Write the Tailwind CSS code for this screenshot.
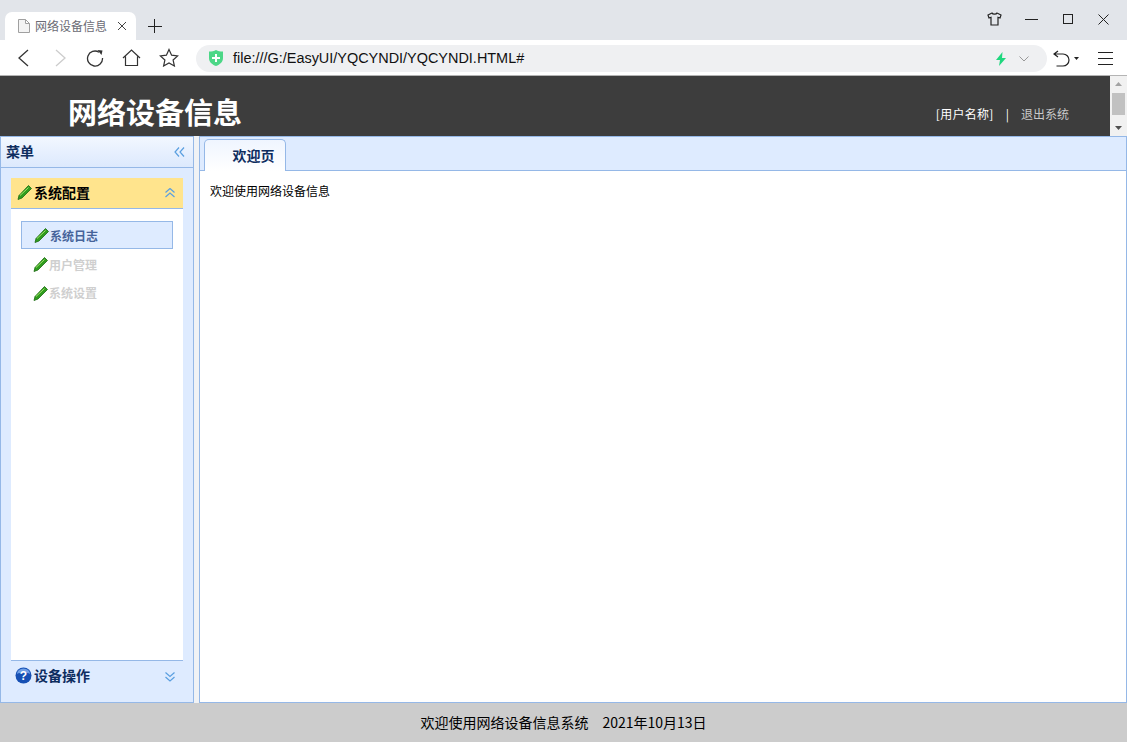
<!DOCTYPE html>
<html lang="zh-CN">
<head>
  <meta charset="UTF-8" />
  <title>网络设备信息</title>
  <script src="https://cdn.jsdelivr.net/npm/@tailwindcss/browser@4"></script>
</head>
<body class="h-[742px] w-[1127px] overflow-hidden flex flex-col bg-white font-['Noto_Sans_CJK_SC','Liberation_Sans',sans-serif] text-[12px] text-black">
  <!-- browser tab strip -->
  <div class="h-[40px] bg-[#e2e5ea] flex items-end pl-[5px] relative shrink-0">
    <div class="w-[131px] h-[28px] bg-white rounded-t-[7px] flex items-center pl-[13px] text-[#6b6b75]">
      <svg width="12" height="14" viewBox="0 0 12 14" fill="#f4f4f4" stroke="#a0a0a0"><path d="M.5.5h7l4 4v9H.5zM7.5.5v4h4"/></svg>
      <span class="ml-[5px] leading-[18px]">网络设备信息</span>
      <svg class="ml-[10px]" width="10" height="10" viewBox="0 0 10 10" stroke="#444" fill="none"><path d="M1 1l8 8M9 1l-8 8"/></svg>
    </div>
    <svg class="ml-[12px] mb-[7px]" width="14" height="14" viewBox="0 0 14 14" stroke="#222" fill="none"><path d="M6.500 0v14M0 7.500h14"/></svg>
    <div class="absolute top-[12px] left-[987px] flex items-center">
      <svg width="15" height="14" viewBox="0 0 15 14" stroke="#222" fill="none" stroke-width="1.200"><path d="M5 1L1 3l1 3 2-.7V13h7V5.300l2 .7 1-3-4-2c-.5 1.600-4.500 1.600-5 0z"/></svg>
      <svg class="ml-[23px]" width="13" height="14" viewBox="0 0 13 14" stroke="#222" fill="none"><path d="M0 7.500h13"/></svg>
      <svg class="ml-[25px]" width="10" height="10" viewBox="0 0 10 10" stroke="#222" fill="none"><rect x=".5" y=".5" width="9" height="9"/></svg>
      <svg class="ml-[25px]" width="11" height="11" viewBox="0 0 11 11" stroke="#222" fill="none"><path d="M.5.500l10 10M10.500.500l-10 10"/></svg>
    </div>
  </div>

  <!-- browser toolbar -->
  <div class="h-[36px] bg-white border-b border-[#b4b4b4] flex items-center relative shrink-0">
    <svg class="absolute left-[18px] top-[9px]" width="11" height="18" viewBox="0 0 11 18" stroke="#333" fill="none" stroke-width="1.300"><path d="M10 1L1 9l9 8"/></svg>
    <svg class="absolute left-[55px] top-[9px]" width="11" height="18" viewBox="0 0 11 18" stroke="#ccc" fill="none" stroke-width="1.300"><path d="M1 1l9 8-9 8"/></svg>
    <svg class="absolute left-[86px] top-[9px]" width="18" height="18" viewBox="0 0 18 18" stroke="#333" fill="none" stroke-width="1.300"><path d="M13 3.200A7.500 7.500 0 1 0 16.500 9"/><path d="M11.500 1l5 .5-1 4.500z" fill="#333" stroke="none"/></svg>
    <svg class="absolute left-[122px] top-[9px]" width="19" height="18" viewBox="0 0 19 18" stroke="#333" fill="none" stroke-width="1.200"><path d="M1 9l8.500-8L18 9M3.500 7.500V16.500h12V7.500"/></svg>
    <svg class="absolute left-[159px] top-[8px]" width="20" height="19" viewBox="0 0 20 19" stroke="#333" fill="none" stroke-width="1.200"><path d="M10 1.500l2.600 5.700 6 .7-4.500 4.100 1.300 6L10 15l-5.400 3 1.300-6-4.500-4.100 6-.7z"/></svg>
    <div class="absolute left-[196px] top-[5px] w-[851px] h-[27px] rounded-full bg-[#eff0f2] flex items-center pl-[13px] text-[14.450px] text-[#111]">
      <svg class="-mt-[2px]" width="14" height="16" viewBox="0 0 14 16"><path d="M0 1.500C3 1.500 5 1 7 0c2 1 4 1.500 7 1.500V8c0 4-3 6.500-7 8-4-1.500-7-4-7-8z" fill="#4cd787"/><path d="M6 4h2v3h3v2H8v3H6V9H3V7h3z" fill="#fff"/></svg>
      <span class="ml-[10px] mt-[1px] font-['Liberation_Sans',sans-serif]">file:///G:/EasyUI/YQCYNDI/YQCYNDI.HTML#</span>
      <svg class="absolute left-[800px] top-[7px]" width="10" height="14" viewBox="0 0 10 14"><path d="M6.500 0L0 8h4l-1 6 7-8H6z" fill="#1fd77e"/></svg>
      <svg class="absolute left-[823px] top-[11px]" width="10" height="6" viewBox="0 0 10 6" stroke="#999" fill="none"><path d="M.5.500L5 5 9.500.500"/></svg>
    </div>
    <svg class="absolute left-[1053px] top-[10px]" width="17" height="17" viewBox="0 0 17 17" stroke="#222" fill="none" stroke-width="1.200"><path d="M5 1L1 4l4 3M1 4h9a5.500 5.500 0 0 1 0 12H3.500"/></svg>
    <svg class="absolute left-[1074px] top-[17px]" width="5" height="3" viewBox="0 0 5 3"><path d="M0 0h5L2.500 3z" fill="#222"/></svg>
    <svg class="absolute left-[1098px] top-[11px]" width="15" height="14" viewBox="0 0 15 14" stroke="#222" fill="none"><path d="M0 1.500h15M0 7.500h15M0 13.500h15"/></svg>
  </div>

  <!-- page header -->
  <div class="h-[60px] bg-[#3d3d3d] flex shrink-0">
    <div class="flex-1 flex relative">
      <h1 class="ml-[68px] mt-[14px] text-[29px] leading-[42px] font-bold text-white">网络设备信息</h1>
      <div class="absolute right-[41px] top-[29px] flex items-center leading-[18px]">
        <span class="text-white tracking-[0.3px]">[用户名称]</span>
        <span class="ml-[12px] text-white">|</span>
        <span class="ml-[12px] text-[#c9c9c9]">退出系统</span>
      </div>
    </div>
    <div class="w-[17px] bg-[#f1f1f1] flex flex-col items-center justify-between py-[6px]">
      <svg width="7" height="4" viewBox="0 0 7 4"><path d="M0 4l3.500-4L7 4z" fill="#a3a3a3"/></svg>
      <div class="w-[13px] h-[22px] bg-[#c1c1c1] -mt-[1px] mb-[3px]"></div>
      <svg width="7" height="4" viewBox="0 0 7 4"><path d="M0 0l3.500 4L7 0z" fill="#505050"/></svg>
    </div>
  </div>

  <!-- main -->
  <div class="flex-1 min-h-0 flex bg-[#f0f2f5]">
    <!-- left menu -->
    <aside class="w-[194px] border border-[#95b8e7] bg-[#deebff] flex flex-col">
      <div class="h-[31px] border-b border-[#95b8e7] bg-gradient-to-b from-[#f2f7ff] to-[#dce9fd] flex items-center justify-between pl-[5px] pr-[8px]">
        <span class="font-bold text-[14px] leading-[20px] -mt-[2px] text-[#0e2d5f]">菜单</span>
        <svg width="11" height="10" viewBox="0 0 11 10" stroke="#5a9fe0" fill="none" stroke-width="1.200"><path d="M5 .5L1 5l4 4.500M10 .5L6 5l4 4.500"/></svg>
      </div>
      <div class="flex-1 min-h-0 mx-[10px] mt-[10px] flex flex-col">
        <div class="h-[31px] bg-[#ffe48d] border-b border-[#95b8e7] flex items-center justify-between pl-[6px] pr-[8px] shrink-0">
          <span class="flex items-center gap-[2px] font-bold text-[14px] leading-[20px] -mt-[2px] text-black">
            <svg width="15" height="15" viewBox="0 0 15 15"><path d="M11.500.500l3 3L5 13 1 14.500 2 10.500z" fill="#2f9d1e" stroke="#1c6a12" stroke-width=".8"/><path d="M3 10.500l8.500-8" stroke="#a3e36a"/></svg>
            系统配置
          </span>
          <svg width="10" height="10" viewBox="0 0 10 10" stroke="#5a9fe0" fill="none" stroke-width="1.200"><path d="M.5 4.500L5 .5l4.500 4M.5 9L5 5l4.500 4"/></svg>
        </div>
        <div class="flex-1 min-h-0 bg-white pt-[12px] px-[10px] text-[12px]">
          <div class="h-[28px] border border-[#95b8e7] bg-[#deebff] flex items-center pl-[12px] gap-[1px] font-bold text-[#46639a]">
            <svg width="15" height="15" viewBox="0 0 15 15"><path d="M11.500.500l3 3L5 13 1 14.500 2 10.500z" fill="#2f9d1e" stroke="#1c6a12" stroke-width=".8"/><path d="M3 10.500l8.500-8" stroke="#a3e36a"/></svg>
            <span class="mt-[2px]">系统日志</span>
          </div>
          <div class="h-[29px] mt-[1px] flex items-center pl-[12px] gap-[1px] font-bold text-[#cfcfcf]">
            <svg width="15" height="15" viewBox="0 0 15 15"><path d="M11.500.500l3 3L5 13 1 14.500 2 10.500z" fill="#2f9d1e" stroke="#1c6a12" stroke-width=".8"/><path d="M3 10.500l8.500-8" stroke="#a3e36a"/></svg>
            用户管理
          </div>
          <div class="h-[28px] flex items-center pl-[12px] gap-[1px] font-bold text-[#cfcfcf]">
            <svg width="15" height="15" viewBox="0 0 15 15"><path d="M11.500.500l3 3L5 13 1 14.500 2 10.500z" fill="#2f9d1e" stroke="#1c6a12" stroke-width=".8"/><path d="M3 10.500l8.500-8" stroke="#a3e36a"/></svg>
            系统设置
          </div>
        </div>
        <div class="h-[42px] border-t border-[#95b8e7] flex items-start justify-between pl-[4px] pr-[8px] pt-[4px] shrink-0">
          <span class="flex items-center gap-[2px] font-bold text-[14px] leading-[20px] text-[#0e2d5f]">
            <svg width="17" height="17" viewBox="0 0 17 17"><circle cx="8.500" cy="8.500" r="8" fill="#1650b4"/><path d="M2 7a6.500 5.500 0 0 1 13 0c-3-2-10-2-13 0z" fill="#6f9fe6"/><text x="8.500" y="13" text-anchor="middle" font-size="12" font-weight="700" fill="#fff" font-family="Liberation Sans">?</text></svg>
            设备操作
          </span>
          <svg class="mt-[7px]" width="10" height="10" viewBox="0 0 10 10" stroke="#5a9fe0" fill="none" stroke-width="1.200"><path d="M.5 .5L5 4.500l4.500-4M.5 5L5 9l4.500-4"/></svg>
        </div>
      </div>
    </aside>

    <!-- right content -->
    <section class="ml-[5px] flex-1 border border-[#95b8e7] bg-white flex flex-col">
      <div class="h-[34px] bg-[#deebff] border-b border-[#95b8e7] flex items-end pl-[4px] shrink-0">
        <div class="w-[82px] h-[32px] -mb-[1px] bg-gradient-to-b from-[#eff5ff] to-white border border-b-0 border-[#95b8e7] rounded-t-[5px] flex items-center justify-center pl-[17px] font-bold text-[14px] text-[#0e2d5f]">欢迎页</div>
      </div>
      <div class="pl-[10px] pt-[11px] leading-[18px] text-black">欢迎使用网络设备信息</div>
    </section>
  </div>

  <!-- footer -->
  <footer class="h-[39px] bg-[#cccccc] flex items-center justify-center text-[14px] shrink-0 pb-[1px]">欢迎使用网络设备信息系统<span class="ml-[14px]">2021年10月13日</span></footer>
</body>
</html>
